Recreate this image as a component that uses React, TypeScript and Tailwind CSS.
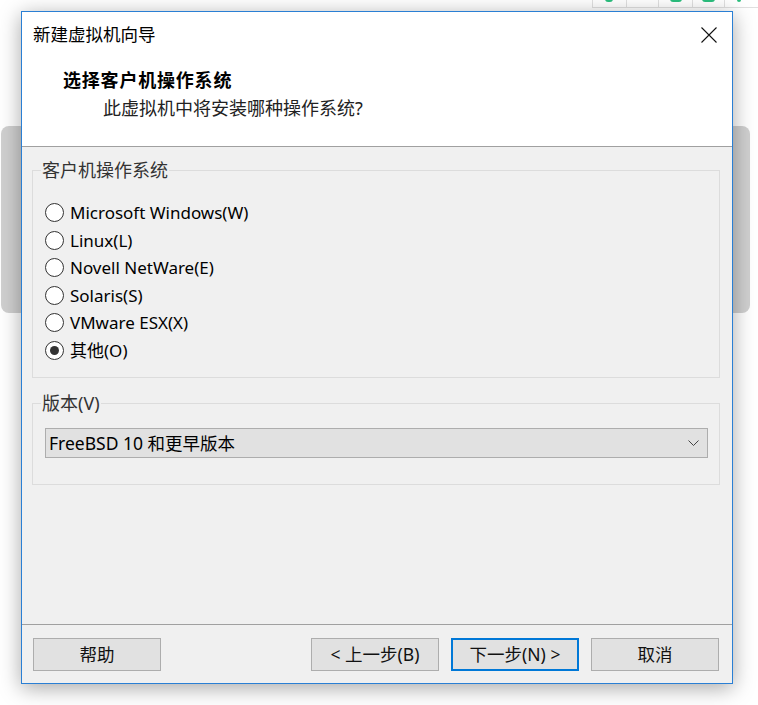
import { useState } from 'react'

const osOptions = [
  { id: 'win', label: 'Microsoft Windows(W)' },
  { id: 'linux', label: 'Linux(L)' },
  { id: 'netware', label: 'Novell NetWare(E)' },
  { id: 'solaris', label: 'Solaris(S)' },
  { id: 'esx', label: 'VMware ESX(X)' },
  { id: 'other', label: '其他(O)' },
]

function Radio({ checked }: { checked: boolean }) {
  return (
    <span className="w-[19px] h-[19px] rounded-full border border-[#333] bg-white flex items-center justify-center shrink-0">
      {checked && <span className="w-[9px] h-[9px] rounded-full bg-[#333]" />}
    </span>
  )
}

function DialogButton({ children, primary }: { children: React.ReactNode; primary?: boolean }) {
  return (
    <button
      className={`w-[128px] h-[33px] bg-[#e1e1e1] flex items-center justify-center text-[17.5px] text-[#111] ${
        primary ? 'border-2 border-[#0078d7]' : 'border border-[#adadad]'
      }`}
    >
      {children}
    </button>
  )
}

export default function App() {
  const [selected, setSelected] = useState('other')

  return (
    <div className="relative w-[758px] h-[705px] bg-white overflow-hidden font-['Noto_Sans','Noto_Sans_CJK_SC',sans-serif]">
      {/* Background page */}
      <div className="flex flex-col">
        <div className="flex justify-end h-[8px]">
          <div className="w-[34px] border-l border-b border-[#e0e0e0] flex justify-center">
            <div className="mt-[-1px] ml-[-2px] w-[8px] h-[3px] rounded-b-sm bg-[#2bbf7e]" />
          </div>
          <div className="w-[32px] border-l border-b border-[#e0e0e0]" />
          <div className="w-[34px] border-l border-b border-[#e0e0e0] flex justify-center">
            <div className="mt-[-1px] w-[12px] h-[3px] rounded-b-sm bg-[#2bbf7e]" />
          </div>
          <div className="w-[32px] border-l border-b border-[#e0e0e0] flex justify-center">
            <div className="mt-[-1px] w-[13px] h-[3px] rounded-b-sm bg-[#2bbf7e]" />
          </div>
          <div className="w-[34px] border-l border-b border-[#e0e0e0] flex">
            <div className="mt-[-1px] ml-[12px] w-[4px] h-[3px] rounded-b-sm bg-[#2bbf7e]" />
          </div>
        </div>
        <div className="ml-[1px] mt-[118px] w-[749px] h-[187px] rounded-[8px] bg-[#d0d0d0]" />
      </div>

      {/* Dialog window */}
      <div className="absolute left-[21px] top-[11px] w-[712px] h-[673px] border border-[#2a7fd4] bg-[#f0f0f0] flex flex-col shadow-[0_4px_20px_rgba(0,0,0,0.35)]">
        {/* Title + header */}
        <div className="bg-white h-[134px] flex flex-col">
          <div className="h-[44px] flex items-center justify-between pl-[11px] pr-[15px]">
            <span className="text-[17.5px] text-black font-['Noto_Sans_CJK_SC',sans-serif]">新建虚拟机向导</span>
            <svg width="16" height="16" viewBox="0 0 16 16" className="mt-[1px]">
              <path d="M0.5 0.5 L15.5 15.5 M15.5 0.5 L0.5 15.5" stroke="#111" strokeWidth="1.1" fill="none" />
            </svg>
          </div>
          <div className="pl-[41px] pt-[11px] text-[18px] leading-[24px] font-bold tracking-[0.8px] text-black font-['Noto_Sans_CJK_SC',sans-serif]">
            选择客户机操作系统
          </div>
          <div className="pl-[81px] mt-[5px] text-[18px] leading-[24px] text-[#222]">
            此虚拟机中将安装哪种操作系统?
          </div>
        </div>
        <div className="h-px bg-[#a0a0a0]" />

        {/* Body */}
        <div className="flex-1 flex flex-col pl-[10px] pr-[12px]">
          <fieldset className="mt-[12px] border border-[#dcdcdc] pl-[12px] pb-[13px]">
            <legend className="ml-[-4px] px-px text-[18px] leading-[22px] text-[#333]">客户机操作系统</legend>
            <div className="pt-[18px] flex flex-col">
              {osOptions.map((o) => (
                <label
                  key={o.id}
                  className="h-[27.5px] flex items-center gap-[6px] text-[17px] text-black cursor-default"
                  onClick={() => setSelected(o.id)}
                >
                  <Radio checked={selected === o.id} />
                  <span>{o.label}</span>
                </label>
              ))}
            </div>
          </fieldset>

          <fieldset className="mt-[14px] border border-[#dcdcdc] pl-[12px] pr-[11px] pb-[26px]">
            <legend className="ml-[-4px] px-px text-[18px] leading-[22px] text-[#333]">版本(V)</legend>
            <div className="pt-[14px]">
              <div className="h-[30px] bg-[#e1e1e1] border border-[#adadad] flex items-center justify-between pl-[3px] pr-[8px]">
                <span className="text-[17.5px] text-black">FreeBSD 10 和更早版本</span>
                <svg width="11" height="7" viewBox="0 0 11 7">
                  <polyline points="0.5,0.5 5.5,5.5 10.5,0.5" stroke="#444" strokeWidth="1" fill="none" />
                </svg>
              </div>
            </div>
          </fieldset>
        </div>

        {/* Footer */}
        <div className="h-px bg-[#a0a0a0]" />
        <div className="h-[58px] flex items-start pt-[13px] pl-[11px] pr-[13px]">
          <DialogButton>帮助</DialogButton>
          <div className="flex-1" />
          <div className="flex gap-[12px]">
            <DialogButton>&lt; 上一步(B)</DialogButton>
            <DialogButton primary>下一步(N) &gt;</DialogButton>
            <DialogButton>取消</DialogButton>
          </div>
        </div>
      </div>
    </div>
  )
}
